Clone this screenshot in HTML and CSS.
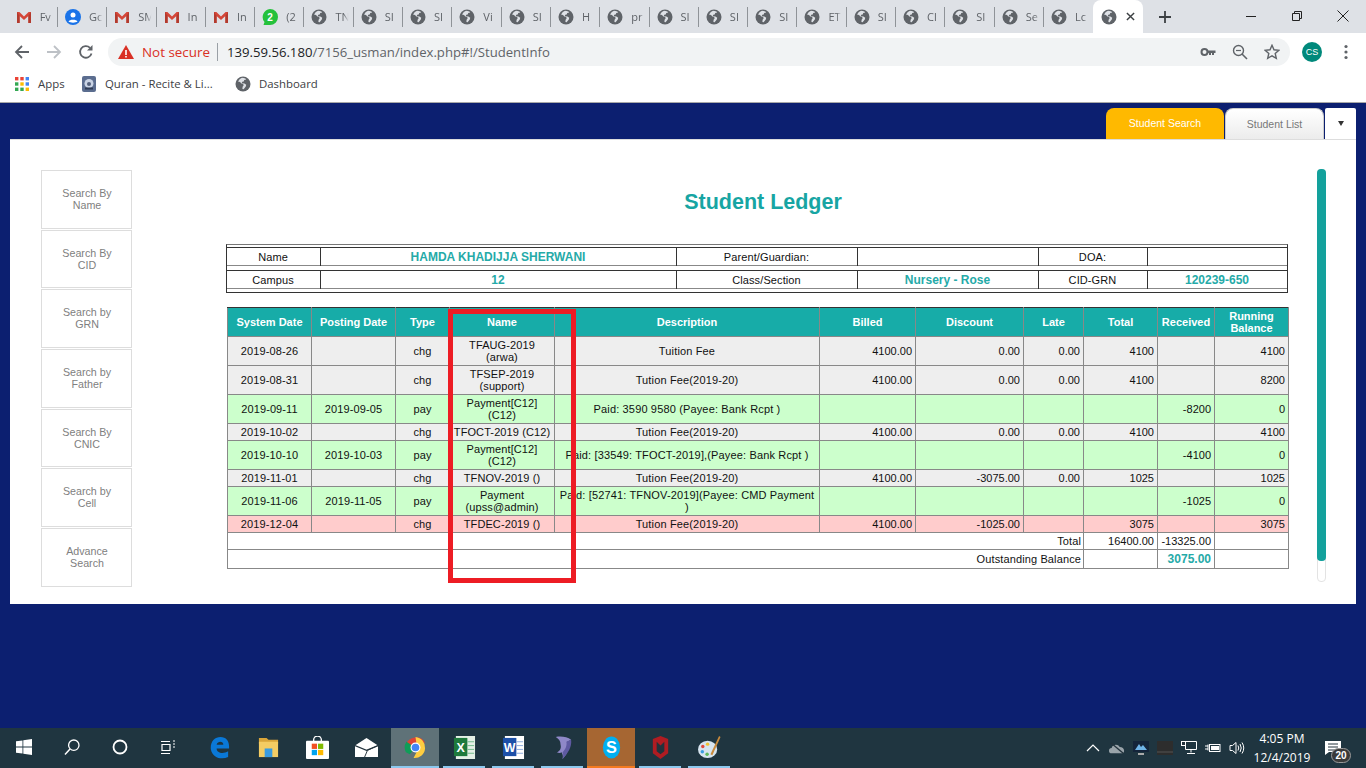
FILE: index.html
```html
<!DOCTYPE html>
<html lang="en">
<head>
<meta charset="utf-8">
<title>Student Ledger</title>
<link rel="stylesheet" href="styles.css">
</head>
<body>
<svg class="defs" width="0" height="0" aria-hidden="true">
  <symbol id="globe" viewBox="0 0 16 16"><circle cx="8" cy="8" r="7.500" fill="#5f6368"/><path d="M7 1.800 4.800 3 3 5.600l2 .4 1.400 1.600 1.800.4.400 1.400-1 1.400-.2 2.200 1.200.2 2.200-2.800.4-1.600-1.800-1.200-2.200-.4-.4-.8 1-.8 1-.2.4-1.400 2-.4-.8-1.200-1.800-.5z" fill="#dee1e6"/></symbol>
  <symbol id="gmail" viewBox="0 0 16 16"><path d="M1 3h2.400L8 7.600 12.600 3H15v11h-2.600V7L8 11 3.600 7v7H1z" fill="#d44638"/><path d="M3.600 7v7H1V3zM12.400 7v7H15V3z" fill="#b23a2e"/></symbol>
</svg>

<header class="browser">
  <div class="tabstrip">
    <div class="tab"><svg class="fav"><use href="#gmail"/></svg><span class="tab-title">Fv</span></div>
    <div class="tab"><svg class="fav" viewBox="0 0 16 16"><circle cx="8" cy="8" r="8" fill="#1a73e8"/><circle cx="8" cy="6" r="2.500" fill="#fff"/><path d="M3.500 12.500c1-2.500 8-2.500 9 0-2 1.500-7 1.500-9 0z" fill="#fff"/></svg><span class="tab-title">Gc</span></div>
    <div class="tab"><svg class="fav"><use href="#gmail"/></svg><span class="tab-title">SM</span></div>
    <div class="tab"><svg class="fav"><use href="#gmail"/></svg><span class="tab-title">In</span></div>
    <div class="tab"><svg class="fav"><use href="#gmail"/></svg><span class="tab-title">In</span></div>
    <div class="tab"><svg class="fav" viewBox="0 0 16 16"><path d="M8 0a8 8 0 0 1 0 16H1.500l1-3A8 8 0 0 1 8 0z" fill="#25c13c"/><text x="8" y="11.500" class="wa-num">2</text></svg><span class="tab-title">(2</span></div>
    <div class="tab"><svg class="fav"><use href="#globe"/></svg><span class="tab-title">TN</span></div>
    <div class="tab"><svg class="fav"><use href="#globe"/></svg><span class="tab-title">SI</span></div>
    <div class="tab"><svg class="fav"><use href="#globe"/></svg><span class="tab-title">SI</span></div>
    <div class="tab"><svg class="fav"><use href="#globe"/></svg><span class="tab-title">Vi</span></div>
    <div class="tab"><svg class="fav"><use href="#globe"/></svg><span class="tab-title">SI</span></div>
    <div class="tab"><svg class="fav"><use href="#globe"/></svg><span class="tab-title">H</span></div>
    <div class="tab"><svg class="fav"><use href="#globe"/></svg><span class="tab-title">pr</span></div>
    <div class="tab"><svg class="fav"><use href="#globe"/></svg><span class="tab-title">SI</span></div>
    <div class="tab"><svg class="fav"><use href="#globe"/></svg><span class="tab-title">SI</span></div>
    <div class="tab"><svg class="fav"><use href="#globe"/></svg><span class="tab-title">SI</span></div>
    <div class="tab"><svg class="fav"><use href="#globe"/></svg><span class="tab-title">ET</span></div>
    <div class="tab"><svg class="fav"><use href="#globe"/></svg><span class="tab-title">SI</span></div>
    <div class="tab"><svg class="fav"><use href="#globe"/></svg><span class="tab-title">Cl</span></div>
    <div class="tab"><svg class="fav"><use href="#globe"/></svg><span class="tab-title">SI</span></div>
    <div class="tab"><svg class="fav"><use href="#globe"/></svg><span class="tab-title">Se</span></div>
    <div class="tab tab-last"><svg class="fav"><use href="#globe"/></svg><span class="tab-title">Lc</span></div>
    <div class="tab-active"><svg class="fav"><use href="#globe"/></svg>
      <svg class="tab-x" viewBox="0 0 10 10"><path d="M1 1l8 8M9 1l-8 8" stroke="#3c4043" stroke-width="1.600"/></svg></div>
    <svg class="newtab" viewBox="0 0 14 14"><path d="M7 1v12M1 7h12" stroke="#3c4043" stroke-width="1.800"/></svg>
    <div class="winctl">
      <div class="winbtn"><svg viewBox="0 0 12 12"><path d="M1 6.500h10" stroke="#222"/></svg></div>
      <div class="winbtn"><svg viewBox="0 0 12 12"><path d="M1.500 3.500h7v7h-7zM3.500 3.500v-2h7v7h-2" fill="none" stroke="#222"/></svg></div>
      <div class="winbtn"><svg viewBox="0 0 12 12"><path d="M.5.500l11 11M11.500.500l-11 11" stroke="#222"/></svg></div>
    </div>
  </div>

  <div class="toolbar">
    <div class="navbtn"><svg viewBox="0 0 16 16"><path d="M15 8H2M8 2 2 8l6 6" fill="none" stroke="#5f6368" stroke-width="1.800"/></svg></div>
    <div class="navbtn"><svg viewBox="0 0 16 16"><path d="M1 8h13M8 2l6 6-6 6" fill="none" stroke="#bdc1c6" stroke-width="1.800"/></svg></div>
    <div class="navbtn"><svg viewBox="0 0 16 16"><path d="M13.500 9.500A5.800 5.800 0 1 1 12 3.800" fill="none" stroke="#5f6368" stroke-width="1.800"/><path d="M14.500 1v5.500H9z" fill="#5f6368"/></svg></div>
    <div class="omnibox">
      <svg class="warn" viewBox="0 0 16 16"><path d="M8 1 16 15H0z" fill="#d93025"/><path d="M7.200 6h1.600v5H7.200zM7.200 12h1.600v1.500H7.200z" fill="#fff"/></svg>
      <span class="not-secure">Not secure</span>
      <span class="url"><span class="url-host">139.59.56.180</span>/7156_usman/index.php#!/StudentInfo</span>
      <div class="omni-icons">
        <svg viewBox="0 0 16 16"><circle cx="4.500" cy="8" r="3" fill="none" stroke="#5f6368" stroke-width="2"/><path d="M7 6.500h8.500v2.500H14v2h-2V9h-1v2H9V9H7z" fill="#5f6368"/></svg>
        <svg viewBox="0 0 16 16"><circle cx="6.500" cy="6.500" r="5" fill="none" stroke="#5f6368" stroke-width="1.400"/><path d="M10 10l5 5" stroke="#5f6368" stroke-width="1.600"/><path d="M4 6.500h5" stroke="#5f6368" stroke-width="1.200"/></svg>
        <svg viewBox="0 0 16 16"><path d="M8 1.300l2 4.500 4.900.5-3.700 3.200 1.100 4.800L8 11.800l-4.300 2.500 1.100-4.800L1.100 6.300 6 5.800z" fill="none" stroke="#5f6368" stroke-width="1.400"/></svg>
      </div>
    </div>
    <div class="avatar">CS</div>
    <svg class="kebab" viewBox="0 0 4 16"><circle cx="2" cy="2.500" r="1.600" fill="#5f6368"/><circle cx="2" cy="8" r="1.600" fill="#5f6368"/><circle cx="2" cy="13.500" r="1.600" fill="#5f6368"/></svg>
  </div>

  <nav class="bookmarks">
    <svg class="apps-grid" viewBox="0 0 14 14">
      <rect width="3.400" height="3.400" fill="#ea4335"/><rect x="5.300" width="3.400" height="3.400" fill="#ea4335"/><rect x="10.600" width="3.400" height="3.400" fill="#4285f4"/>
      <rect y="5.300" width="3.400" height="3.400" fill="#34a853"/><rect x="5.300" y="5.300" width="3.400" height="3.400" fill="#fbbc05"/><rect x="10.600" y="5.300" width="3.400" height="3.400" fill="#4285f4"/>
      <rect y="10.600" width="3.400" height="3.400" fill="#34a853"/><rect x="5.300" y="10.600" width="3.400" height="3.400" fill="#34a853"/><rect x="10.600" y="10.600" width="3.400" height="3.400" fill="#fbbc05"/>
    </svg>
    <span class="bm-label bm-apps">Apps</span>
    <svg class="bm-icon" viewBox="0 0 16 16"><rect x="1" width="14" height="16" rx="2" fill="#5b6d8f"/><circle cx="8" cy="7.500" r="4.500" fill="#c9d3e4"/><path d="M4 11.500h8v2H4z" fill="#2f3c55"/><circle cx="8" cy="8" r="2" fill="#54617c"/></svg>
    <span class="bm-label bm-quran">Quran - Recite &amp; Li...</span>
    <svg class="bm-icon"><use href="#globe"/></svg>
    <span class="bm-label">Dashboard</span>
  </nav>
</header>

<main class="app">
  <div class="app-tabs">
    <div class="app-tab app-tab-on">Student Search</div>
    <div class="app-tab app-tab-off">Student List</div>
    <div class="app-tab-more"><span class="caret"></span></div>
  </div>

  <section class="panel">
    <aside class="side">
      <div class="side-btn">Search By<br>Name</div>
      <div class="side-btn">Search By<br>CID</div>
      <div class="side-btn">Search by<br>GRN</div>
      <div class="side-btn">Search by<br>Father</div>
      <div class="side-btn">Search By<br>CNIC</div>
      <div class="side-btn">Search by<br>Cell</div>
      <div class="side-btn">Advance<br>Search</div>
    </aside>

    <div class="content">
      <h1 class="title">Student Ledger</h1>

      <div class="info">
        <div class="info-row">
          <div class="info-cell">Name</div>
          <div class="info-cell info-val">HAMDA KHADIJJA SHERWANI</div>
          <div class="info-cell">Parent/Guardian:</div>
          <div class="info-cell"></div>
          <div class="info-cell">DOA:</div>
          <div class="info-cell"></div>
        </div>
        <div class="info-row">
          <div class="info-cell">Campus</div>
          <div class="info-cell info-val">12</div>
          <div class="info-cell">Class/Section</div>
          <div class="info-cell info-val">Nursery - Rose</div>
          <div class="info-cell">CID-GRN</div>
          <div class="info-cell info-val">120239-650</div>
        </div>
      </div>

      <div class="ledger-wrap">
        <table class="ledger">
          <colgroup>
            <col class="c-sys"><col class="c-post"><col class="c-type"><col class="c-name"><col class="c-desc"><col class="c-bill"><col class="c-disc"><col class="c-late"><col class="c-total"><col class="c-recv"><col class="c-bal">
          </colgroup>
          <thead>
            <tr><th>System Date</th><th>Posting Date</th><th>Type</th><th>Name</th><th>Description</th><th>Billed</th><th>Discount</th><th>Late</th><th>Total</th><th>Received</th><th>Running Balance</th></tr>
          </thead>
          <tbody>
            <tr class="chg tall"><td>2019-08-26</td><td></td><td>chg</td><td>TFAUG-2019 (arwa)</td><td class="desc">Tuition Fee</td><td class="num">4100.00</td><td class="num">0.00</td><td class="num">0.00</td><td class="num">4100</td><td></td><td class="num">4100</td></tr>
            <tr class="chg tall"><td>2019-08-31</td><td></td><td>chg</td><td>TFSEP-2019 (support)</td><td class="desc">Tution Fee(2019-20)</td><td class="num">4100.00</td><td class="num">0.00</td><td class="num">0.00</td><td class="num">4100</td><td></td><td class="num">8200</td></tr>
            <tr class="pay tall"><td>2019-09-11</td><td>2019-09-05</td><td>pay</td><td>Payment[C12] (C12)</td><td class="desc">Paid: 3590 9580 (Payee: Bank Rcpt )</td><td></td><td></td><td></td><td></td><td class="num">-8200</td><td class="num">0</td></tr>
            <tr class="chg short"><td>2019-10-02</td><td></td><td>chg</td><td>TFOCT-2019 (C12)</td><td class="desc">Tution Fee(2019-20)</td><td class="num">4100.00</td><td class="num">0.00</td><td class="num">0.00</td><td class="num">4100</td><td></td><td class="num">4100</td></tr>
            <tr class="pay tall"><td>2019-10-10</td><td>2019-10-03</td><td>pay</td><td>Payment[C12] (C12)</td><td class="desc">Paid: [33549: TFOCT-2019],(Payee: Bank Rcpt )</td><td></td><td></td><td></td><td></td><td class="num">-4100</td><td class="num">0</td></tr>
            <tr class="chg short"><td>2019-11-01</td><td></td><td>chg</td><td>TFNOV-2019 ()</td><td class="desc">Tution Fee(2019-20)</td><td class="num">4100.00</td><td class="num">-3075.00</td><td class="num">0.00</td><td class="num">1025</td><td></td><td class="num">1025</td></tr>
            <tr class="pay tall"><td>2019-11-06</td><td>2019-11-05</td><td>pay</td><td>Payment (upss@admin)</td><td class="desc">Paid: [52741: TFNOV-2019](Payee: CMD Payment )</td><td></td><td></td><td></td><td></td><td class="num">-1025</td><td class="num">0</td></tr>
            <tr class="due short"><td>2019-12-04</td><td></td><td>chg</td><td>TFDEC-2019 ()</td><td class="desc">Tution Fee(2019-20)</td><td class="num">4100.00</td><td class="num">-1025.00</td><td></td><td class="num">3075</td><td></td><td class="num">3075</td></tr>
            <tr class="short"><td class="num foot-label" colspan="8">Total</td><td class="num">16400.00</td><td class="num">-13325.00</td><td></td></tr>
            <tr class="last"><td class="num foot-label" colspan="8">Outstanding Balance</td><td></td><td class="num outstanding">3075.00</td><td></td></tr>
          </tbody>
        </table>
        <div class="red-box"></div>
      </div>
    </div>

    <div class="scroll"><div class="scroll-thumb"></div></div>
  </section>
</main>

<footer class="taskbar">
  <div class="tb-item"><svg viewBox="0 0 16 16"><path d="M0 2.300 6.500 1.400v6.200H0zM7.300 1.300 16 0v7.600H7.300zM0 8.400h6.500v6.200L0 13.700zM7.300 8.400H16V16l-8.700-1.300z" fill="#fff"/></svg></div>
  <div class="tb-item"><svg viewBox="0 0 16 16"><circle cx="9.800" cy="6.200" r="5.200" fill="none" stroke="#fff" stroke-width="1.300"/><path d="M6 10 1 15.500" stroke="#fff" stroke-width="1.500"/></svg></div>
  <div class="tb-item"><svg viewBox="0 0 16 16"><circle cx="8" cy="8" r="6.500" fill="none" stroke="#fff" stroke-width="1.800"/></svg></div>
  <div class="tb-item tb-gap"><svg viewBox="0 0 16 16"><path d="M1 2.500h9M1 14.500h9M2 5.500h8v6H2zM13 2h2M13 5h2M13 8h2" fill="none" stroke="#fff" stroke-width="1.200"/></svg></div>

  <div class="tb-item tb-app"><svg class="tb-big" viewBox="0 0 24 24"><path d="M3 14C2 6 7 1 13 1c6 0 9 4 9 10v2H9c0 5 7 6 12 3v6c-7 3-16 1-18-8zm6-5h7c0-4-6-4-7 0z" fill="#0a78d7"/></svg></div>
  <div class="tb-item tb-app"><svg class="tb-big" viewBox="0 0 24 24"><path d="M2 2h8l2 2h10v4H2z" fill="#d9a53a"/><path d="M2 6h20v16H2z" fill="#f4cc63"/><path d="M8 13h8v9H8z" fill="#3a9be0"/></svg></div>
  <div class="tb-item tb-app"><svg class="tb-big" viewBox="0 0 24 24"><path d="M8 6V4a4 4 0 0 1 8 0v2" fill="none" stroke="#fff" stroke-width="1.400"/><rect y="5" width="24" height="19" rx="1" fill="#fff"/><rect x="6" y="8" width="5.500" height="5.500" fill="#f25022"/><rect x="12.500" y="8" width="5.500" height="5.500" fill="#7fba00"/><rect x="6" y="14.500" width="5.500" height="5.500" fill="#00a4ef"/><rect x="12.500" y="14.500" width="5.500" height="5.500" fill="#ffb900"/></svg></div>
  <div class="tb-item tb-app"><svg class="tb-big" viewBox="0 0 24 24"><path d="M0 10 12 2l12 8v12H0z" fill="#fff"/><path d="M0 10l12 5 12-5" fill="none" stroke="#22323c" stroke-width="1.200"/><path d="M10 22l3-7 11-5" fill="none" stroke="#22323c" stroke-width="1"/></svg></div>
  <div class="tb-item tb-app tb-chrome"><svg class="tb-big" viewBox="0 0 24 24"><path d="M12 12 2 9a11 11 0 0 1 20-2H12z" fill="#db4437"/><path d="M12 12 6 19 2 17A11 11 0 0 1 2.500 6z" fill="#0f9d58"/><path d="M12 1a11 11 0 1 1-2 22l4-8z" fill="#ffcd40"/><circle cx="12" cy="12" r="5.200" fill="#fff"/><circle cx="12" cy="12" r="4" fill="#4285f4"/></svg></div>
  <div class="tb-item tb-app"><svg class="tb-big" viewBox="0 0 24 24"><path d="M3 0h20v24H3z" fill="#e4f0e6"/><path d="M1 2h14v19H1z" fill="#1e7a3c"/><path d="M15 6h7M15 10h7M15 14h7M15 18h7" stroke="#6fb98a"/><text x="8" y="16.500" class="tb-letter">X</text></svg></div>
  <div class="tb-item tb-app"><svg class="tb-big" viewBox="0 0 24 24"><path d="M3 0h20v24H3z" fill="#fff"/><path d="M1 2h14v19H1z" fill="#1d50a8"/><path d="M15 6h7M15 10h7M15 14h7M15 18h7" stroke="#8aa9dc"/><text x="8" y="16.500" class="tb-letter">W</text></svg></div>
  <div class="tb-item tb-app"><svg class="tb-big" viewBox="0 0 24 24"><path d="M5 1c6-1 12 0 16 3l-4 2c2 6 1 12-5 18 1-3 0-5-1-7-1 1-3 1-5 0 3-1 5-4 4-8C10 5 8 3 5 1z" fill="#8f88c8"/><path d="M12 17c3-3 5-7 4-11l5-2c1 7-3 14-9 20 1-3 1-5 0-7z" fill="#5f5aa2"/></svg></div>
  <div class="tb-item tb-app tb-skype"><svg class="tb-big" viewBox="0 0 24 24"><ellipse cx="12" cy="12" rx="9" ry="11.500" fill="#00aff0"/><text x="12" y="18" class="tb-letter tb-s">S</text></svg></div>
  <div class="tb-item tb-app"><svg class="tb-big" viewBox="0 0 24 24"><path d="M4 3l8-3 8 3v15l-8 6-8-6z" fill="#b01c22"/><path d="M8 6l4 4 4-4v10l-4 3-4-3z" fill="#22323c"/></svg></div>
  <div class="tb-item tb-app"><svg class="tb-big" viewBox="0 0 24 24"><ellipse cx="10" cy="14" rx="10" ry="9" fill="#d6e4ef"/><circle cx="5" cy="11" r="1.800" fill="#e2483d"/><circle cx="10" cy="8.500" r="1.800" fill="#f1c232"/><circle cx="4.500" cy="16.500" r="1.800" fill="#3a9be0"/><circle cx="9.500" cy="19" r="1.800" fill="#5cb85c"/><path d="M22 0l1.500 1L15 20l-2-1z" fill="#c98a3c"/></svg></div>

  <div class="tray">
    <div class="tray-ico"><svg viewBox="0 0 14 14"><path d="M1 10l6-6 6 6" fill="none" stroke="#fff" stroke-width="1.200"/></svg></div>
    <div class="tray-ico"><svg viewBox="0 0 18 14"><path d="M3 13a3 3 0 0 1 0-6c1-4 7-5 9-1 3 0 5 2 5 4s-1 3-3 3z" fill="#9aa4aa"/><path d="M2 1l14 12" stroke="#22323c" stroke-width="1.500"/></svg></div>
    <div class="tray-ico"><svg viewBox="0 0 16 14"><rect width="16" height="11" fill="#14243a"/><path d="M2 9l4-6 2 3 2-2 4 5z" fill="#6fb4e8"/><path d="M5 12h6v2H5z" fill="#aaa"/></svg></div>
    <div class="tray-ico"><svg viewBox="0 0 16 14"><rect width="16" height="14" fill="#2d2d2d"/><path d="M0 11h16" stroke="#555"/></svg></div>
    <div class="tray-ico"><svg viewBox="0 0 16 14"><path d="M4.500.500h11v8h-11zM10 8.500v3M6 12.500h8" fill="none" stroke="#fff"/><rect x=".5" y=".5" width="4" height="4" fill="#22323c" stroke="#fff"/></svg></div>
    <div class="tray-ico"><svg viewBox="0 0 16 12"><rect x="4.500" y="2.500" width="10.500" height="7" fill="none" stroke="#fff"/><rect x="6" y="4" width="8" height="4" fill="#fff"/><path d="M0 4h3M0 7h3M3 2.500v6" stroke="#fff"/></svg></div>
    <div class="tray-ico"><svg viewBox="0 0 16 14"><path d="M1 4.500h2.500L7 1.500v11l-3.500-3H1z" fill="none" stroke="#fff"/><path d="M9 4.500q1.500 2.500 0 5M11 3q2.500 4 0 8M13 1.500q3.500 5.500 0 11" fill="none" stroke="#fff"/></svg></div>
    <div class="clock"><span>4:05 PM</span><span>12/4/2019</span></div>
    <div class="notif">
      <svg viewBox="0 0 16 14"><path d="M0 0h16v11H4l-4 3z" fill="#fff"/><path d="M3 3h10M3 6h10M3 9h7" stroke="#22323c"/></svg>
      <span class="notif-badge">20</span>
    </div>
  </div>
</footer>
</body>
</html>
```
FILE: styles.css
```css
* { box-sizing: border-box; }
html, body { margin: 0; padding: 0; }
body {
  width: 1366px;
  height: 768px;
  overflow: hidden;
  display: flex;
  flex-direction: column;
  font-family: "Liberation Sans", Arial, sans-serif;
  background: #0c1f70;
}
.defs { position: absolute; }

/* Browser chrome */
.browser { height: 103px; flex: none; background: #fff; font-family: "Open Sans", "Noto Sans", sans-serif; }
.tabstrip { height: 33px; background: #dee1e6; display: flex; align-items: center; padding-left: 8.7px; }
.tab { width: 49.3px; height: 33px; display: flex; align-items: center; padding-left: 7px; position: relative; flex: none; }
.tab::after { content: ""; position: absolute; right: 0; top: 7px; width: 1px; height: 20px; background: #8f9398; }
.tab-last::after { display: none; }
.fav { width: 16px; height: 16px; flex: none; }
.wa-num { font: bold 10px "Liberation Sans", sans-serif; fill: #fff; text-anchor: middle; }
.tab-title {
  margin-left: 8px;
  width: 17px;
  white-space: nowrap;
  font-size: 11px;
  color: #5f6368;
  -webkit-mask-image: linear-gradient(90deg, #000 50%, transparent 80%);
  mask-image: linear-gradient(90deg, #000 50%, transparent 80%);
}
.tab-active { width: 50px; height: 33px; background: #fff; border-radius: 8px 8px 0 0; display: flex; align-items: center; padding-left: 8px; flex: none; }
.tab-x { width: 9px; height: 9px; margin-left: 9px; }
.newtab { width: 14px; height: 14px; margin-left: 15px; flex: none; }
.winctl { margin-left: auto; display: flex; }
.winbtn { width: 46px; height: 30px; display: flex; align-items: center; justify-content: center; padding-bottom: 2px; }
.winbtn svg { width: 12px; height: 12px; }

.toolbar { height: 33px; padding-top: 5px; display: flex; align-items: center; padding-left: 6px; }
.navbtn { width: 32px; height: 28px; display: flex; align-items: center; justify-content: center; flex: none; }
.navbtn svg { width: 16px; height: 16px; }
.omnibox { margin-left: 6px; width: 1182px; height: 28px; background: #f1f3f4; border-radius: 14px; display: flex; align-items: center; padding-left: 10px; flex: none; }
.warn { width: 16px; height: 16px; flex: none; }
.not-secure { margin-left: 8px; font-size: 13.4px; color: #d93025; padding-right: 7px; border-right: 1px solid #9aa0a6; line-height: 18px; }
.url { margin-left: 9px; font-size: 13.15px; color: #5f6368; white-space: nowrap; }
.url-host { color: #202124; }
.omni-icons { margin-left: auto; display: flex; gap: 16px; padding-right: 10px; }
.omni-icons svg { width: 16px; height: 16px; }
.avatar { margin-left: 12px; width: 20px; height: 20px; border-radius: 50%; background: #00897b; color: #fff; font: 9px/20px "Liberation Sans", sans-serif; text-align: center; flex: none; }
.kebab { margin-left: 22px; width: 4px; height: 16px; flex: none; }

.bookmarks { height: 37px; display: flex; align-items: center; padding-left: 15px; padding-bottom: 1px; border-bottom: 1px solid #a8a8a8; font-size: 11.4px; color: #3c4043; }
.apps-grid { width: 14px; height: 14px; flex: none; }
.bm-label { white-space: nowrap; }
.bm-apps { margin-left: 9px; width: 27px; }
.bm-icon { width: 16px; height: 16px; margin: 0 8px 0 16px; flex: none; }
.bm-quran { width: 114px; }

/* App */
.app { height: 625px; flex: none; background: #0c1f70; padding: 0 10px; }
.app-tabs { height: 36px; padding-top: 5px; display: flex; justify-content: flex-end; }
.app-tab { height: 31px; border-radius: 8px 8px 0 0; font-size: 10.5px; text-align: center; line-height: 31px; }
.app-tab-on { width: 118px; background: #ffb900; color: #fff; }
.app-tab-off { width: 99px; margin-left: 1px; background: linear-gradient(#fff, #ececec); color: #777; line-height: 30px; border: 1px solid #ccc; border-bottom: 0; }
.app-tab-more { width: 31px; margin-left: 1px; height: 31px; background: #fff; display: flex; align-items: center; justify-content: center; border-radius: 2px 2px 0 0; }
.caret { width: 0; height: 0; border: 3.5px solid transparent; border-top: 5px solid #333; border-bottom: 0; }

.panel { height: 465px; background: #fff; border-top: 1px solid #ddd; display: flex; align-items: flex-start; }
.side { margin: 30px 0 0 31px; width: 91px; display: flex; flex-direction: column; gap: 1px; flex: none; }
.side-btn { height: 58.67px; border: 1px solid #ddd; padding: 16px 0 0 1px; font-size: 10.7px; line-height: 12px; color: #808080; text-align: center; }

.content { margin-left: 94px; width: 1063px; flex: none; color: #111; font-size: 11px; }
.title { margin: 49px 0 29px; padding-left: 11px; height: 26px; font-size: 21.5px; line-height: 26px; font-weight: bold; color: #17a5a3; text-align: center; }

.info { width: 1062px; border: 1px solid #333; border-top-color: #777; padding: 2px 0 3px; display: flex; flex-direction: column; gap: 4px; }
.info-row { height: 19px; display: grid; grid-template-columns: 93px 356px 181px 181px 109px 140px; border-top: 1px solid #333; border-bottom: 1px solid #888; }
.info-cell { border-left: 1px solid #333; text-align: center; line-height: 18px; letter-spacing: .1px; padding-right: 1px; }
.info-cell:first-child { border-left: 0; }
.info-val { font-size: 12px; font-weight: bold; color: #25aaa8; letter-spacing: 0; }

.ledger-wrap { position: relative; margin: 14px 0 0 1px; width: 1062px; }
.ledger { width: 1062px; table-layout: fixed; border-collapse: collapse; border: 1px solid #333; letter-spacing: .1px; }
.c-sys, .c-post { width: 84px; }
.c-type { width: 54px; }
.c-name { width: 105px; }
.c-desc { width: 265px; }
.c-bill { width: 96px; }
.c-disc { width: 108px; }
.c-late { width: 60px; }
.c-total { width: 74px; }
.c-recv { width: 57px; }
.c-bal { width: 74px; }
.ledger th, .ledger td { border: 1px solid #888; padding: 0 2px; line-height: 12px; text-align: center; font-weight: normal; }
.ledger thead tr { height: 29px; }
.ledger th { background: #17aca8; color: #fff; font-weight: bold; border-top-color: #333; letter-spacing: 0; }
.ledger td.desc { padding: 0 4px; letter-spacing: .15px; }
.ledger td.num { text-align: right; padding-right: 3px; letter-spacing: 0; }
.ledger td.foot-label { padding-right: 2px; letter-spacing: .12px; }
.ledger tr.tall { height: 29px; }
.ledger tr.short { height: 17px; }
.ledger tr.last { height: 19px; }
.chg td { background: #eee; }
.pay td { background: #ccffcc; }
.due td { background: #ffcccc; }
.ledger td.outstanding { font-size: 12px; font-weight: bold; color: #25aaa8; }
.red-box { position: absolute; left: 221px; top: 2px; width: 128px; height: 274px; border: 5px solid #ed1c24; }

.scroll { margin: 29px 0 0 28px; width: 9px; height: 413px; border: 1px solid #e3e3e3; border-radius: 4px; background: #fff; flex: none; }
.scroll-thumb { margin: -1px; height: 392px; background: #13a19c; border-radius: 4px; }

/* Taskbar */
.taskbar { height: 40px; flex: none; background: #1f3540; display: flex; align-items: stretch; }
.tb-item { width: 48px; display: flex; align-items: center; justify-content: center; flex: none; border-bottom: 2px solid transparent; }
.tb-item svg { width: 16px; height: 16px; }
.tb-gap { margin-right: 3px; }
.tb-app { margin-right: 1px; }
.tb-app:nth-child(n+10):not(.tb-chrome):not(.tb-skype) { border-image: linear-gradient(90deg, transparent 9%, #8cc8ee 9%, #8cc8ee 91%, transparent 91%) 1; }
.tb-item svg.tb-big { width: 23px; height: 23px; }
.tb-chrome { background: #5f7278; border-bottom-color: #8cc8ee; }
.tb-skype { background: #a66632; border-bottom-color: #f47a20; }
.tb-letter { font: bold 13px "Liberation Sans", sans-serif; fill: #fff; text-anchor: middle; }
.tb-s { font-size: 17px; }
.tray { margin-left: auto; display: flex; align-items: center; padding-right: 15px; color: #fff; }
.tray-ico { width: 24px; display: flex; justify-content: center; }
.tray-ico svg { width: 16px; height: 14px; }
.clock { width: 66px; display: flex; flex-direction: column; align-items: center; gap: 5px; font: 12px/14px "Open Sans", "Noto Sans", sans-serif; }
.notif { position: relative; width: 36px; display: flex; justify-content: center; }
.notif svg { width: 16px; height: 14px; }
.notif-badge { position: absolute; left: 16px; top: 7px; width: 20px; height: 15px; border-radius: 8px; background: #3a3a3a; border: 1px solid #999; font: bold 10px/13px "Liberation Sans", sans-serif; text-align: center; }
```
